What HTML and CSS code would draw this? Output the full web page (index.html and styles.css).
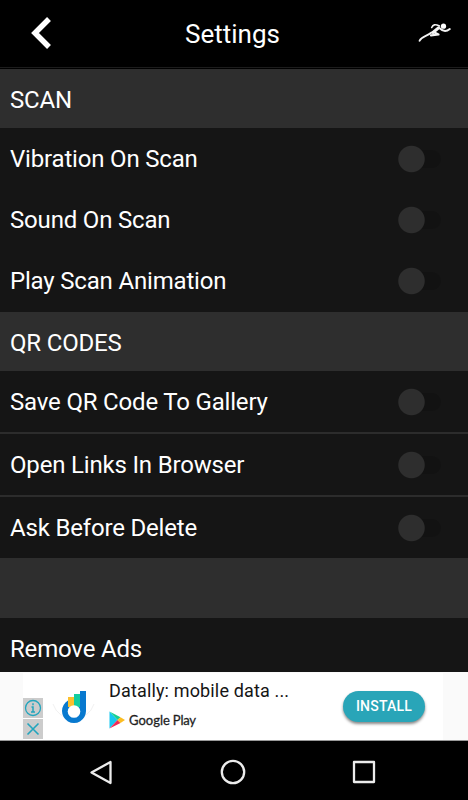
FILE: index.html
```
<!DOCTYPE html>
<html lang="en">
<head>
<meta charset="utf-8">
<title>Settings</title>
<link rel="stylesheet" href="styles.css">
</head>
<body>
<header class="bar">
  <svg class="back" viewBox="0 0 20 32"><path d="M18 2 4 16l14 14" fill="none" stroke="#fff" stroke-width="5.500"/></svg>
  <h1 class="title">Settings</h1>
  <svg class="runner" viewBox="0 0 34 20" fill="none" stroke="#f4f4f4" stroke-linecap="round" stroke-linejoin="round">
    <path d="M1.500 17.800C4 13 9 13.500 13.500 9.500" stroke-width="1.800"/>
    <path d="M20.500 4.800 15 9.500" stroke-width="3"/>
    <path d="M13.700 4.500C15 1.500 17 1 21.500 3" stroke-width="1.600"/>
    <path d="M15.500 9 20.500 11.500 13 12.300" stroke-width="2.200"/>
    <path d="M22 5.500C25 8.500 28 9 31.800 6" stroke-width="2"/>
    <circle cx="25.500" cy="3.200" r="2.600" fill="#fff" stroke="none"/>
  </svg>
</header>
<main class="list">
  <h2 class="section">SCAN</h2>
  <div class="group">
    <div class="row"><span>Vibration On Scan</span><i class="switch"></i></div>
    <div class="row"><span>Sound On Scan</span><i class="switch"></i></div>
    <div class="row"><span>Play Scan Animation</span><i class="switch"></i></div>
  </div>
  <h2 class="section">QR CODES</h2>
  <div class="group divided">
    <div class="row"><span>Save QR Code To Gallery</span><i class="switch"></i></div>
    <div class="row"><span>Open Links In Browser</span><i class="switch"></i></div>
    <div class="row"><span>Ask Before Delete</span><i class="switch"></i></div>
  </div>
  <div class="section blank"></div>
  <div class="row last"><span>Remove Ads</span></div>
</main>
<aside class="ad">
  <div class="ad-card">
    <div class="ad-marks">
      <svg viewBox="0 0 20 20" fill="none" stroke="#22a5bd"><circle cx="10" cy="10" r="7.500" stroke-width="1.300"/><path d="M8.500 9H10v5M8 14h4M10 5.300v1.900" stroke-width="1.500"/></svg>
      <svg viewBox="0 0 20 20" fill="none" stroke="#22a5bd" stroke-width="1.600"><path d="m4.500 4.500 11 11m0-11-11 11"/></svg>
    </div>
    <svg class="datally" viewBox="0 0 46 46">
      <path d="M2 19A21.500 21.500 0 0 0 43 19" fill="none" stroke="#f1f1f1"/>
      <path d="M29 6h6v20a12 12 0 1 1-18-10.400v6.400h12z" fill="#0879cf"/>
      <path d="M17 12h6v10h-6z" fill="#fbc02d"/>
      <path d="M23 9h6v13h-6z" fill="#12cda0"/>
      <circle cx="23" cy="26.500" r="6.300" fill="#fff"/>
    </svg>
    <div class="ad-copy">
      <div class="ad-title">Datally: mobile data ...</div>
      <div class="store">
        <svg viewBox="0 0 16 18"><path d="M.5.500 8.500 9 .5 17.500z" fill="#16c7f1"/><path d="m.5.500 11 5.700L8.500 9z" fill="#16cf91"/><path d="m.5 17.500 8-8.500 3 3z" fill="#ee2a57"/><path d="m11.500 6.200 4.500 2.800-4.500 3-3-3z" fill="#fcbd21"/></svg>
        <span class="google">Google</span><span class="play">Play</span>
      </div>
    </div>
    <div class="install">INSTALL</div>
  </div>
</aside>
<nav class="nav">
  <svg viewBox="0 0 26 26"><path d="M21.500 3v21L2.500 13.500z"/></svg>
  <svg viewBox="0 0 26 26"><circle cx="13" cy="13" r="11.200"/></svg>
  <svg viewBox="0 0 26 26"><path d="M3 3h20v20H3z"/></svg>
</nav>
</body>
</html>
```
FILE: styles.css
```
* { box-sizing: border-box; }
body {
  margin: 0;
  width: 468px;
  height: 800px;
  display: flex;
  flex-direction: column;
  overflow: hidden;
  background: #000;
  color: #fff;
  font-family: Roboto, sans-serif;
  font-size: 24px;
}
svg { display: block; flex: none; }
.bar {
  height: 69px;
  display: grid;
  grid-template-columns: 60px 1fr 60px;
  align-items: center;
  border-bottom: 1px solid #000;
  box-shadow: inset 0 -1px #1c1c1c;
}
.back { width: 20px; height: 32px; margin: 0 0 2px 31px; }
.title { margin: 0 3px 0 0; font-size: 26px; font-weight: 400; text-align: center; line-height: 32px; }
.runner { width: 34px; height: 20px; margin: 0 0 2px 10px; }
.list { height: 603px; flex: none; background: #151515; letter-spacing: -0.18px; }
.section {
  margin: 0;
  height: 59px;
  padding: 3px 10px 0;
  background: #2e2e2e;
  font-size: 24px;
  font-weight: 400;
  line-height: 56px;
}
.group { height: 184px; display: flex; flex-direction: column; }
.group .row { flex: 1; }
.row {
  display: flex;
  align-items: center;
  justify-content: space-between;
  padding: 0 26px 0 10px;
}
.group.divided { height: 187px; }
.divided .row + .row { border-top: 2px solid #2c2c2c; }
.divided .row { flex: 0 0 63px; }
.divided .row:first-child { flex: 0 0 61px; }
.switch {
  width: 44px;
  height: 28px;
  background:
    radial-gradient(circle at 13.500px 14px, #2e2e2e 12.700px, transparent 13.700px),
    linear-gradient(#121212, #121212) 14px 5px / 20px 18px no-repeat,
    radial-gradient(circle at 34px 14px, #121212 8.500px, transparent 9.500px);
}
.section.blank { height: 60px; }
.last { height: 54px; padding-top: 7px; }
.ad { height: 69px; padding: 1px 25px 1px 23px; background: #fafafa; border-bottom: 1px solid #999; }
.ad-card { height: 67px; display: flex; background: #fff; color: #151515; }
.ad-marks { width: 20px; display: grid; gap: 1px; align-content: end; padding-bottom: 1px; }
.ad-marks svg { width: 20px; height: 20px; background: #ccc; }
.datally { width: 46px; height: 46px; margin: 12px 9px 0 8px; }
.ad-copy { width: 215px; padding: 6px 0 0 3px; }
.ad-title { font-size: 18px; line-height: 24px; letter-spacing: 0.15px; white-space: nowrap; }
.store { display: flex; align-items: center; margin-top: 8px; line-height: 18px; font-size: 13px; }
.store svg { width: 16px; height: 18px; margin-right: 4px; }
.google, .play { font-family: Lato, sans-serif; font-weight: 400; -webkit-text-stroke: 0.3px #333; }
.google { margin-right: 3px; }
.play { letter-spacing: -0.2px; }
.install {
  width: 82px;
  height: 31px;
  margin: 18px 0 0 22px;
  border-radius: 16px;
  background: #29a5b8;
  box-shadow: 0 2px 3px #888;
  color: #fff;
  font-size: 14px;
  font-weight: 500;
  letter-spacing: 0.2px;
  line-height: 30px;
  text-align: center;
}
.nav { flex: 1; display: flex; gap: 105px; padding: 18px 0 0 89px; }
.nav svg { width: 26px; height: 26px; fill: none; stroke: #ececec; stroke-width: 2.300; stroke-linejoin: round; }
```
